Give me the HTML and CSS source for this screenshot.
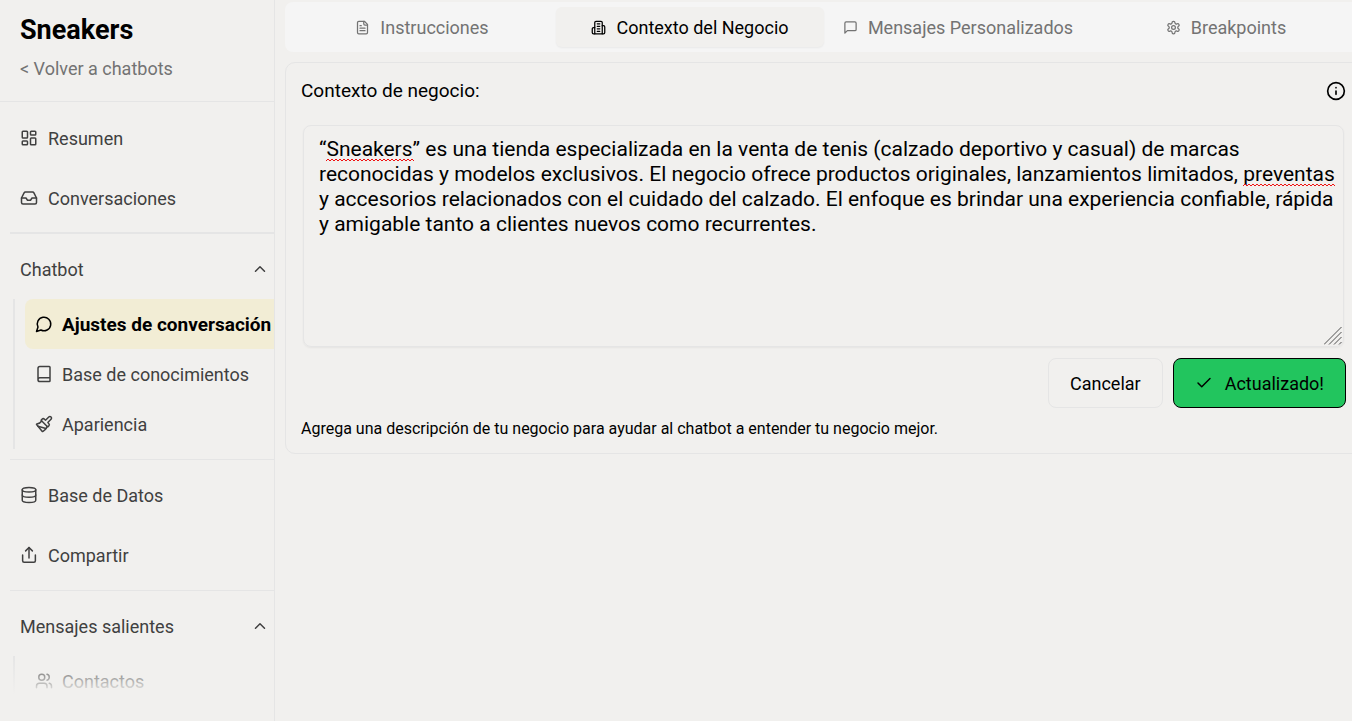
FILE: index.html
```html
<!DOCTYPE html>
<html lang="es">
<head>
<meta charset="UTF-8">
<meta name="viewport" content="width=device-width, initial-scale=1.0">
<title>Sneakers - Ajustes de conversación</title>
<link rel="stylesheet" href="styles.css">
</head>
<body>
  <div class="layout">
    <aside class="sidebar">
      <div class="sidebar-header">
        <h1>Sneakers</h1>
        <a href="#" class="back-link">&lt; Volver a chatbots</a>
      </div>

      <nav class="sidebar-nav">
        <div class="nav-group">
          <a href="#" class="nav-item">
            <svg class="icon" viewBox="0 0 24 24"><rect width="7" height="9" x="3" y="3" rx="1"/><rect width="7" height="5" x="14" y="3" rx="1"/><rect width="7" height="9" x="14" y="12" rx="1"/><rect width="7" height="5" x="3" y="16" rx="1"/></svg>
            Resumen
          </a>
          <a href="#" class="nav-item">
            <svg class="icon" viewBox="0 0 24 24"><path d="M22 12h-6l-2 3h-4l-2-3H2"/><path d="M5.45 5.11 2 12v6a2 2 0 0 0 2 2h16a2 2 0 0 0 2-2v-6l-3.45-6.89A2 2 0 0 0 16.76 4H7.24a2 2 0 0 0-1.79 1.11z"/></svg>
            Conversaciones
          </a>
        </div>

        <div class="nav-section first">
          <button type="button" class="section-toggle">
            Chatbot
            <svg class="icon" viewBox="0 0 24 24"><path d="m18 15-6-6-6 6"/></svg>
          </button>
          <div class="sub-nav">
            <a href="#" class="sub-item active">
              <svg class="icon" viewBox="0 0 24 24"><path d="M7.9 20A9 9 0 1 0 4 16.1L2 22Z"/></svg>
              Ajustes de conversación
            </a>
            <a href="#" class="sub-item">
              <svg class="icon" viewBox="0 0 24 24"><path d="M4 19.500v-15A2.500 2.500 0 0 1 6.500 2H19a1 1 0 0 1 1 1v18a1 1 0 0 1-1 1H6.500a1 1 0 0 1 0-5H20"/></svg>
              Base de conocimientos
            </a>
            <a href="#" class="sub-item">
              <svg class="icon" viewBox="0 0 24 24"><path d="m14.622 17.897-10.680-2.913"/><path d="M18.376 2.622a1 1 0 1 1 3.002 3.002L17.360 9.643a.5.5 0 0 0 0 .707l.944.944a2.410 2.410 0 0 1 0 3.408l-.944.944a.5.5 0 0 1-.707 0L8.354 7.348a.5.5 0 0 1 0-.707l.944-.944a2.410 2.410 0 0 1 3.408 0l.944.944a.5.5 0 0 0 .707 0z"/><path d="M9 8c-1.804 2.710-3.970 3.460-6.583 3.948a.507.507 0 0 0-.302.819l7.320 8.883a1 1 0 0 0 1.185.204C12.735 20.405 16 16.792 16 15"/></svg>
              Apariencia
            </a>
          </div>
        </div>

        <div class="nav-section nav-group">
          <a href="#" class="nav-item">
            <svg class="icon" viewBox="0 0 24 24"><ellipse cx="12" cy="5" rx="9" ry="3"/><path d="M3 5v14a9 3 0 0 0 18 0V5"/><path d="M3 12a9 3 0 0 0 18 0"/></svg>
            Base de Datos
          </a>
          <a href="#" class="nav-item">
            <svg class="icon" viewBox="0 0 24 24"><path d="M3.500 12v7.500a2 2 0 0 0 2 2h13a2 2 0 0 0 2-2V12"/><path d="m16.500 6.500-4.500-4.500-4.500 4.500"/><path d="M12 2v14"/></svg>
            Compartir
          </a>
        </div>

        <div class="nav-section">
          <button type="button" class="section-toggle">
            Mensajes salientes
            <svg class="icon" viewBox="0 0 24 24"><path d="m18 15-6-6-6 6"/></svg>
          </button>
          <div class="sub-nav">
            <a href="#" class="sub-item">
              <svg class="icon" viewBox="0 0 24 24"><path d="M2 21v-2a4 4 0 0 1 4-4h6a4 4 0 0 1 4 4v2"/><circle cx="9" cy="7" r="4"/><path d="M22 21v-2a4 4 0 0 0-3-3.870"/><path d="M16 3.130a4 4 0 0 1 0 7.750"/></svg>
              Contactos
            </a>
          </div>
        </div>
      </nav>
      <div class="sidebar-fade"></div>
    </aside>

    <main class="content">
      <div class="tabs" role="tablist">
        <button type="button" class="tab" role="tab">
          <svg class="icon" viewBox="0 0 24 24"><path d="M15 2H6a2 2 0 0 0-2 2v16a2 2 0 0 0 2 2h12a2 2 0 0 0 2-2V7Z"/><path d="M14 2v4a2 2 0 0 0 2 2h4"/><path d="M10 9H8"/><path d="M16 13H8"/><path d="M16 17H8"/></svg>
          Instrucciones
        </button>
        <button type="button" class="tab active" role="tab" aria-selected="true">
          <svg class="icon" viewBox="0 0 24 24"><path d="M6 22V4a2 2 0 0 1 2-2h8a2 2 0 0 1 2 2v18Z"/><path d="M6 12H4a2 2 0 0 0-2 2v6a2 2 0 0 0 2 2h2"/><path d="M18 9h2a2 2 0 0 1 2 2v9a2 2 0 0 1-2 2h-2"/><path d="M10 6h4"/><path d="M10 10h4"/><path d="M10 14h4"/><path d="M10 18h4"/></svg>
          Contexto del Negocio
        </button>
        <button type="button" class="tab" role="tab">
          <svg class="icon" viewBox="0 0 24 24"><path d="M21 15a2 2 0 0 1-2 2H7l-4 4V5a2 2 0 0 1 2-2h14a2 2 0 0 1 2 2z"/></svg>
          Mensajes Personalizados
        </button>
        <button type="button" class="tab" role="tab">
          <svg class="icon" viewBox="0 0 24 24"><path d="M12.220 2h-.440a2 2 0 0 0-2 2v.180a2 2 0 0 1-1 1.730l-.430.250a2 2 0 0 1-2 0l-.150-.080a2 2 0 0 0-2.730.730l-.220.380a2 2 0 0 0 .730 2.730l.150.100a2 2 0 0 1 1 1.720v.510a2 2 0 0 1-1 1.740l-.150.090a2 2 0 0 0-.730 2.730l.220.380a2 2 0 0 0 2.730.730l.150-.080a2 2 0 0 1 2 0l.430.250a2 2 0 0 1 1 1.730V20a2 2 0 0 0 2 2h.440a2 2 0 0 0 2-2v-.180a2 2 0 0 1 1-1.730l.430-.250a2 2 0 0 1 2 0l.150.080a2 2 0 0 0 2.730-.730l.220-.390a2 2 0 0 0-.730-2.730l-.150-.080a2 2 0 0 1-1-1.740v-.500a2 2 0 0 1 1-1.740l.150-.090a2 2 0 0 0 .730-2.730l-.220-.380a2 2 0 0 0-2.730-.730l-.150.080a2 2 0 0 1-2 0l-.430-.250a2 2 0 0 1-1-1.730V4a2 2 0 0 0-2-2z"/><circle cx="12" cy="12" r="3"/></svg>
          Breakpoints
        </button>
      </div>

      <form class="card">
        <div class="card-header">
          <label for="business-context">Contexto de negocio:</label>
          <button type="button" class="info-btn" aria-label="Información">
            <svg class="icon" viewBox="0 0 24 24"><circle cx="12" cy="12" r="10"/><path d="M12 16v-4"/><path d="M12 8h.01"/></svg>
          </button>
        </div>

        <div class="editor">
          <textarea id="business-context" class="editor-text" spellcheck="false">“Sneakers” es una tienda especializada en la venta de tenis (calzado deportivo y casual) de marcas reconocidas y modelos exclusivos. El negocio ofrece productos originales, lanzamientos limitados, preventas y accesorios relacionados con el cuidado del calzado. El enfoque es brindar una experiencia confiable, rápida y amigable tanto a clientes nuevos como recurrentes.</textarea>
          <svg id="spell-marks" class="spell-marks" aria-hidden="true"></svg>
          <svg class="grip" viewBox="0 0 18 18"><path d="M0 17.500 17.500 0M5 17.500 17.500 5M10 17.500 17.500 10M15 17.500l2.500-2.500"/></svg>
        </div>

        <div class="actions">
          <button type="button" class="btn">Cancelar</button>
          <button type="submit" class="btn btn-success">
            <svg class="icon" viewBox="0 0 24 24"><path d="M20 6 9 17l-5-5"/></svg>
            Actualizado!
          </button>
        </div>

        <p class="help">Agrega una descripción de tu negocio para ayudar al chatbot a entender tu negocio mejor.</p>
      </form>
    </main>
  </div>

  <script>
    const unknownWords = /(Sneakers|preventas)/;
    const textarea = document.getElementById('business-context');
    const marks = document.getElementById('spell-marks');

    function updateMarks() {
      // Temporary copy of the text, only used to measure the words
      const mirror = document.createElement('div');
      mirror.className = 'editor-text mirror';
      textarea.value.split(unknownWords).forEach((part, index) => {
        const node = document.createElement(index % 2 ? 'u' : 'span');
        node.textContent = part;
        mirror.appendChild(node);
      });
      textarea.parentNode.appendChild(mirror);

      let d = '';
      mirror.querySelectorAll('u').forEach(word => {
        const y = word.offsetTop + word.offsetHeight + 1;
        d += `M${word.offsetLeft + 1} ${y}`;
        for (let x = 0; x < word.offsetWidth; x += 4) {
          d += 'l2 -2 l2 2';
        }
      });
      mirror.remove();
      marks.innerHTML = `<path d="${d}"/>`;
    }

    textarea.addEventListener('input', updateMarks);
    window.addEventListener('resize', updateMarks);
    updateMarks();
  </script>
</body>
</html>
```
FILE: styles.css
```css
* {
  box-sizing: border-box;
}
body {
  margin: 0;
  font-family: Roboto, "Liberation Sans", Arial, sans-serif;
  font-size: 18px;
  line-height: 25px;
  color: #000000;
  background-color: #f1f0ee;
}
h1, p {
  margin: 0;
}
a {
  color: inherit;
  text-decoration: none;
}
button, textarea {
  font: inherit;
  color: inherit;
  background: none;
  border: none;
  margin: 0;
  padding: 0;
}
button {
  cursor: pointer;
}
.icon {
  width: 18px;
  height: 18px;
  flex-shrink: 0;
  fill: none;
  stroke: currentColor;
  stroke-width: 2;
  stroke-linecap: round;
  stroke-linejoin: round;
}
.layout {
  display: flex;
  height: 100vh;
  overflow: hidden;
}

/* Sidebar */
.sidebar {
  position: relative;
  width: 275px;
  flex-shrink: 0;
  border-right: 1px solid #e5e5e5;
  color: #404040;
  overflow: hidden;
}
.sidebar-header {
  padding: 16px 20px 20px;
  border-bottom: 1px solid #e5e5e5;
}
.sidebar-header h1 {
  font-size: 27px;
  line-height: 28px;
  color: #000000;
}
.back-link {
  display: block;
  margin-top: 12px;
  color: #737373;
}
.sidebar-nav {
  padding: 11px 0 0 10px;
}
.nav-group {
  display: flex;
  flex-direction: column;
  gap: 10px;
}
.nav-item, .sub-item {
  display: flex;
  align-items: center;
  height: 50px;
  padding-left: 10px;
  gap: 10px;
}
.nav-section {
  margin-top: 10px;
  padding-top: 10px;
  border-top: 1px solid #e5e5e5;
}
.nav-section.first {
  margin-top: 9px;
  border-top-width: 2px;
}
.section-toggle {
  display: flex;
  align-items: center;
  justify-content: space-between;
  width: 100%;
  height: 50px;
  padding: 0 5px 0 10px;
}
.sub-nav {
  margin: 5px 0 0 3px;
  padding-left: 10px;
  border-left: 2px solid #e5e5e5;
}
.sub-item {
  gap: 9px;
  white-space: nowrap;
}
.sub-item.active {
  background-color: #f2edd5;
  border-radius: 8px 0 0 8px;
  color: #000000;
  font-size: 19px;
  font-weight: bold;
}
.sidebar-fade {
  position: absolute;
  left: 0;
  right: 0;
  bottom: 0;
  height: 66px;
  background: linear-gradient(to bottom, rgba(241, 240, 238, 0), #f1f0ee 60%);
}

/* Main content */
.content {
  flex: 1;
  min-width: 0;
  margin-right: -11px;
  padding: 2px 0 0 10px;
}
.tabs {
  display: grid;
  grid-template-columns: repeat(4, 1fr);
  height: 50px;
  padding: 5px 3px;
  border-radius: 8px;
  background-color: #f5f5f5;
}
.tab {
  display: flex;
  align-items: center;
  justify-content: center;
  gap: 10px;
  border-radius: 6px;
  color: #737373;
}
.tab .icon {
  width: 15px;
  height: 15px;
}
.tab.active {
  background-color: #f1f0ee;
  color: #000000;
  box-shadow: 0 1px 2px rgba(0, 0, 0, 0.05);
}
.card {
  margin-top: 10px;
  padding: 15px 16px 12px 15px;
  border: 1px solid #e5e5e5;
  border-radius: 10px;
}
.card-header {
  display: flex;
  align-items: center;
  justify-content: space-between;
}
.card-header label {
  font-size: 19px;
}
.info-btn {
  display: flex;
}
.info-btn .icon {
  width: 20px;
  height: 20px;
}
.editor {
  position: relative;
  margin: 22px 2px 0;
}
.editor-text {
  display: block;
  width: 100%;
  height: 222px;
  padding: 11px 4px 11px 15px;
  border: 1px solid #e5e5e5;
  border-radius: 8px;
  font-size: 21px;
  white-space: pre-wrap;
  overflow-wrap: break-word;
}
.editor textarea {
  box-shadow: 0 1px 2px rgba(0, 0, 0, 0.05);
  resize: none;
  outline: none;
}
.mirror {
  position: absolute;
  top: 0;
  left: 0;
  visibility: hidden;
}
.spell-marks {
  position: absolute;
  top: 0;
  left: 0;
  width: 100%;
  height: 100%;
  fill: none;
  stroke: #f01010;
  pointer-events: none;
}
.grip {
  position: absolute;
  right: 2px;
  bottom: 2px;
  width: 18px;
  height: 18px;
  fill: none;
  stroke: #505050;
  pointer-events: none;
}
.actions {
  display: flex;
  justify-content: flex-end;
  gap: 10px;
  margin-top: 11px;
}
.btn {
  display: flex;
  align-items: center;
  gap: 12px;
  height: 50px;
  padding: 0 21px;
  border: 1px solid #e5e5e5;
  border-radius: 8px;
}
.btn-success {
  background-color: #22c55e;
  border-color: #000000;
}
.help {
  margin-top: 8px;
  font-size: 16px;
}
```
